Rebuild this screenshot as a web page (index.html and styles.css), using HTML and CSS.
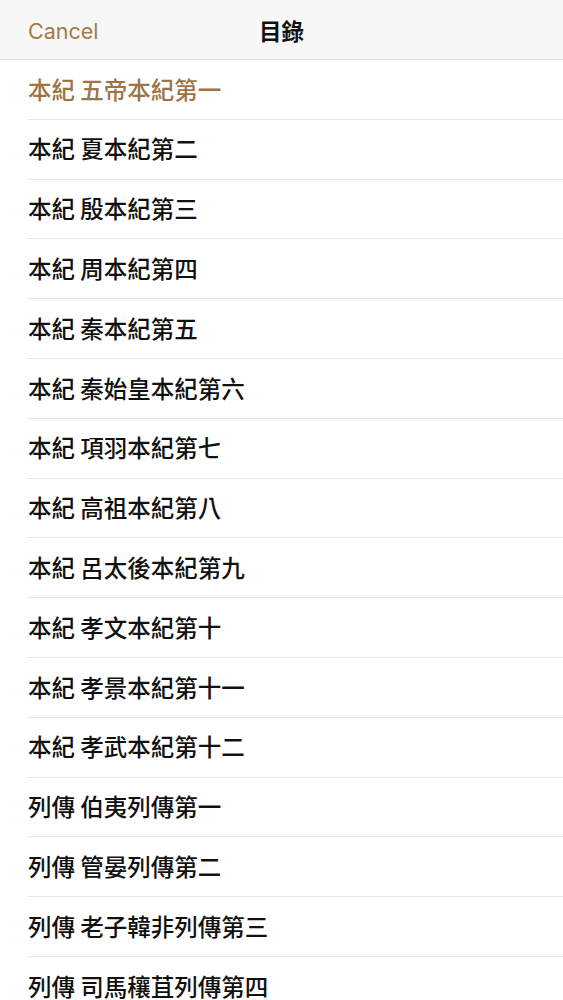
FILE: index.html
```html
<!DOCTYPE html>
<html lang="zh-Hant">
<head>
<meta charset="utf-8">
<title>目錄</title>
<link rel="stylesheet" href="styles.css">
</head>
<body>
<header class="navbar">
  <span class="nav-cancel">Cancel</span>
  <span class="nav-title">目錄</span>
</header>
<ul class="toc">
  <li class="toc-item current">本紀 五帝本紀第一</li>
  <li class="toc-item">本紀 夏本紀第二</li>
  <li class="toc-item">本紀 殷本紀第三</li>
  <li class="toc-item">本紀 周本紀第四</li>
  <li class="toc-item">本紀 秦本紀第五</li>
  <li class="toc-item">本紀 秦始皇本紀第六</li>
  <li class="toc-item">本紀 項羽本紀第七</li>
  <li class="toc-item">本紀 高祖本紀第八</li>
  <li class="toc-item">本紀 呂太後本紀第九</li>
  <li class="toc-item">本紀 孝文本紀第十</li>
  <li class="toc-item">本紀 孝景本紀第十一</li>
  <li class="toc-item">本紀 孝武本紀第十二</li>
  <li class="toc-item">列傳 伯夷列傳第一</li>
  <li class="toc-item">列傳 管晏列傳第二</li>
  <li class="toc-item">列傳 老子韓非列傳第三</li>
  <li class="toc-item">列傳 司馬穰苴列傳第四</li>
</ul>
</body>
</html>
```
FILE: styles.css
```css
html, body {
  margin: 0;
  padding: 0;
  background: #ffffff;
  overflow: hidden;
}
body {
  font-family: "Noto Sans CJK TC", "Noto Sans", sans-serif;
  color: #111111;
}
.navbar {
  position: relative;
  height: 59px;
  background: #f7f7f7;
  border-bottom: 1px solid #dcdcdc;
  display: flex;
  align-items: center;
  justify-content: center;
}
.nav-cancel {
  position: absolute;
  left: 28px;
  top: 1px;
  line-height: 60px;
  font-family: "Inter", "Liberation Sans", sans-serif;
  font-size: 21.5px;
  color: #a27b4b;
}
.nav-title {
  font-size: 22.5px;
  font-weight: 600;
  color: #111111;
  line-height: 1;
  padding-top: 2px;
}
.toc {
  list-style: none;
  margin: 0;
  padding: 0 0 0 28px;
}
.toc-item {
  box-sizing: border-box;
  height: 59.8px;
  border-bottom: 1px solid #e6e6e6;
  display: flex;
  align-items: center;
  font-size: 23.5px;
  font-weight: 500;
  line-height: 1;
  white-space: nowrap;
}
.toc-item.current {
  color: #9d7444;
}
```
